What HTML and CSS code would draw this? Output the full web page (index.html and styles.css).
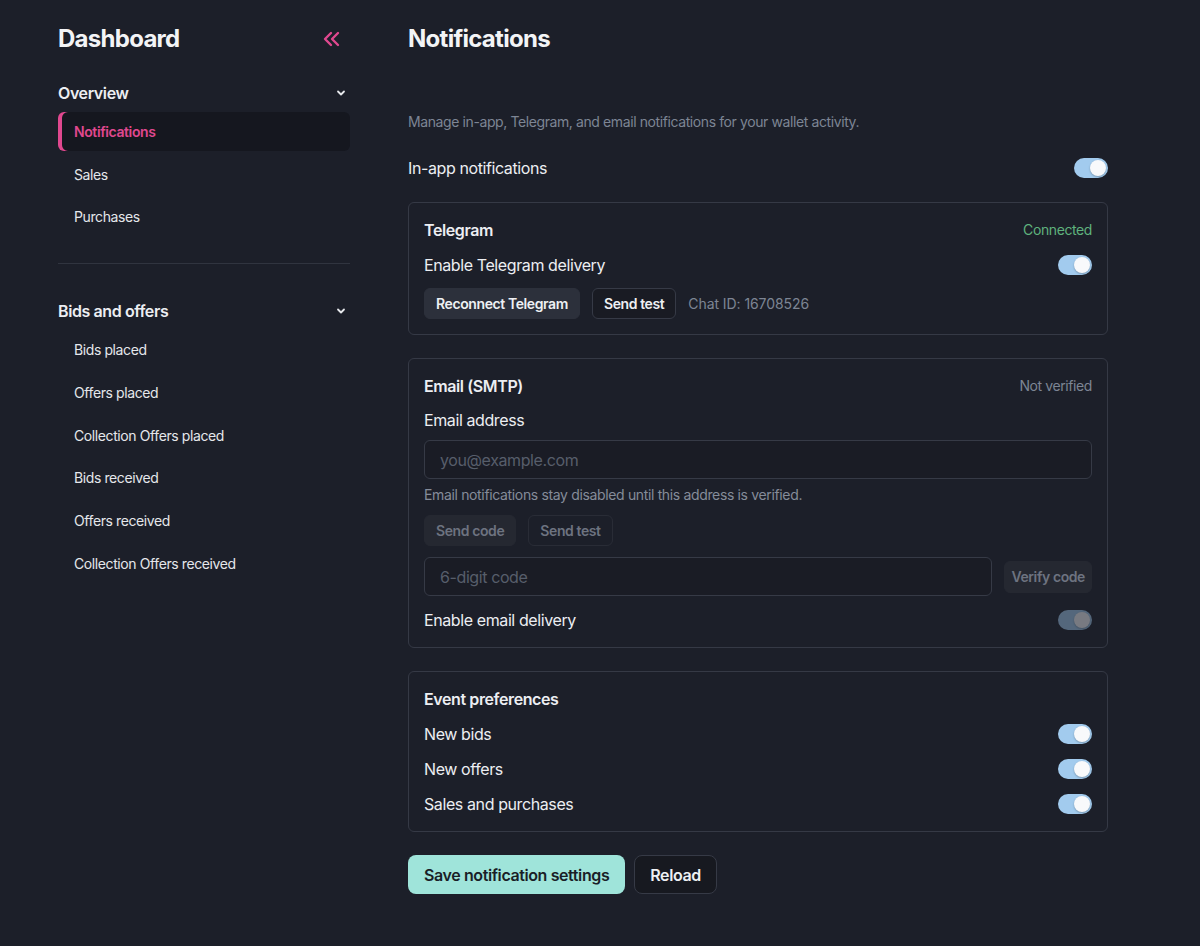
FILE: index.html
```html
<!DOCTYPE html>
<html lang="en">
<head>
<meta charset="utf-8">
<title>Notifications</title>
<link rel="stylesheet" href="styles.css">
</head>
<body>
<div class="layout">
  <aside class="sidebar">
    <div class="side-head">
      <h1 class="brand">Dashboard</h1>
      <button class="collapse" aria-label="Collapse">
        <svg width="20" height="20" viewBox="0 0 20 20" fill="none" stroke="currentColor" stroke-width="2.4" stroke-linecap="round" stroke-linejoin="round"><path d="M10 4 L4 10 L10 16"/><path d="M17 4 L11 10 L17 16"/></svg>
      </button>
    </div>

    <div class="section">
      <div class="section-head"><span>Overview</span>
        <svg class="chev" width="10" height="10" viewBox="0 0 10 10" fill="none" stroke="currentColor" stroke-width="1.8" stroke-linecap="round" stroke-linejoin="round"><path d="M2 3.5 L5 6.5 L8 3.5"/></svg>
      </div>
      <nav class="nav">
        <a class="nav-item active">Notifications</a>
        <a class="nav-item">Sales</a>
        <a class="nav-item">Purchases</a>
      </nav>
    </div>

    <div class="divider"></div>

    <div class="section section2">
      <div class="section-head"><span>Bids and offers</span>
        <svg class="chev" width="10" height="10" viewBox="0 0 10 10" fill="none" stroke="currentColor" stroke-width="1.8" stroke-linecap="round" stroke-linejoin="round"><path d="M2 3.5 L5 6.5 L8 3.5"/></svg>
      </div>
      <nav class="nav">
        <a class="nav-item">Bids placed</a>
        <a class="nav-item">Offers placed</a>
        <a class="nav-item">Collection Offers placed</a>
        <a class="nav-item">Bids received</a>
        <a class="nav-item">Offers received</a>
        <a class="nav-item">Collection Offers received</a>
      </nav>
    </div>
  </aside>

  <main class="main">
    <h1 class="page-title">Notifications</h1>
    <p class="desc">Manage in-app, Telegram, and email notifications for your wallet activity.</p>

    <div class="row inapp">
      <span>In-app notifications</span>
      <span class="toggle on"><span class="knob"></span></span>
    </div>

    <section class="card tg">
      <div class="row card-head">
        <span class="card-title">Telegram</span>
        <span class="status ok">Connected</span>
      </div>
      <div class="row">
        <span>Enable Telegram delivery</span>
        <span class="toggle on"><span class="knob"></span></span>
      </div>
      <div class="btns">
        <button class="btn solid">Reconnect Telegram</button>
        <button class="btn outline">Send test</button>
        <span class="muted chat">Chat ID: 16708526</span>
      </div>
    </section>

    <section class="card email">
      <div class="row card-head">
        <span class="card-title">Email (SMTP)</span>
        <span class="status muted">Not verified</span>
      </div>
      <label class="label">Email address</label>
      <div class="input email-input">you@example.com</div>
      <p class="help">Email notifications stay disabled until this address is verified.</p>
      <div class="btns btns-email">
        <button class="btn solid disabled">Send code</button>
        <button class="btn outline disabled">Send test</button>
      </div>
      <div class="code-row">
        <div class="input code-input">6-digit code</div>
        <button class="btn solid disabled verify">Verify code</button>
      </div>
      <div class="row enable-email">
        <span>Enable email delivery</span>
        <span class="toggle on off-state"><span class="knob"></span></span>
      </div>
    </section>

    <section class="card events">
      <div class="card-title ev-title">Event preferences</div>
      <div class="row"><span>New bids</span><span class="toggle on"><span class="knob"></span></span></div>
      <div class="row"><span>New offers</span><span class="toggle on"><span class="knob"></span></span></div>
      <div class="row"><span>Sales and purchases</span><span class="toggle on"><span class="knob"></span></span></div>
    </section>

    <div class="actions">
      <button class="btn primary">Save notification settings</button>
      <button class="btn outline big">Reload</button>
    </div>
  </main>
</div>
</body>
</html>
```

FILE: styles.css
```css
* { box-sizing: border-box; }
html, body { margin: 0; padding: 0; }
body {
  background: #1c1f29;
  color: #eceef2;
  font-family: Inter, "Noto Sans", "Liberation Sans", sans-serif;
  letter-spacing: -0.025em;
  height: 946px;
  overflow: hidden;
}
button { font-family: inherit; letter-spacing: inherit; cursor: pointer; }

.layout {
  display: flex;
  gap: 58px;
  padding-left: 58px;
}

/* Sidebar */
.sidebar {
  width: 292px;
  flex-shrink: 0;
  padding-top: 23px;
}
.side-head {
  display: flex;
  align-items: center;
  justify-content: space-between;
  height: 32px;
}
.brand {
  margin: 0;
  font-size: 24px;
  line-height: 32px;
  font-weight: 700;
  color: #f3f4f6;
  letter-spacing: -0.03em;
}
.collapse {
  background: none;
  border: 0;
  padding: 0;
  margin-right: 9px;
  color: #e0488f;
  display: flex;
}
.section { margin-top: 26px; }
.section2 { margin-top: 35px; }
.section-head {
  display: flex;
  align-items: center;
  justify-content: space-between;
  height: 24px;
  font-size: 16px;
  font-weight: 600;
  color: #eceef2;
}
.chev { margin-right: 4px; color: #e5e7eb; }
.nav {
  display: flex;
  flex-direction: column;
  gap: 3.7px;
  margin-top: 7px;
}
.nav-item {
  display: flex;
  align-items: center;
  height: 39px;
  padding-left: 16px;
  font-size: 14px;
  color: #e5e7eb;
  border-radius: 6px;
}
.nav-item.active {
  background: #15171f;
  color: #e0488f;
  font-weight: 600;
  box-shadow: inset 4px 0 0 #e0488f;
}
.divider {
  height: 1px;
  background: #30343f;
  margin-top: 27px;
}

/* Main */
.main {
  width: 700px;
  padding-top: 23px;
  font-size: 16px;
}
.page-title {
  margin: 0;
  font-size: 24px;
  line-height: 32px;
  font-weight: 700;
  color: #f3f4f6;
  letter-spacing: -0.03em;
}
.desc {
  margin: 57px 0 0;
  font-size: 14px;
  line-height: 20px;
  color: #7d8594;
}
.row {
  display: flex;
  align-items: center;
  justify-content: space-between;
  height: 24px;
  line-height: 24px;
}
.inapp { margin-top: 24px; }

.toggle {
  width: 34px;
  height: 20px;
  border-radius: 10px;
  background: #3a3f4b;
  display: inline-flex;
  align-items: center;
  padding: 2px;
  flex-shrink: 0;
}
.toggle.on {
  background: #a2cbee;
  justify-content: flex-end;
}
.knob {
  width: 16px;
  height: 16px;
  border-radius: 50%;
  background: #f8f9fb;
  box-shadow: 0 1px 2px rgba(0,0,0,0.25);
}
.toggle.off-state { opacity: 0.42; }

.card {
  border: 1px solid #353945;
  border-radius: 6px;
  padding: 15px 15px 15px;
  margin-top: 22px;
  display: flex;
  flex-direction: column;
}
.tg { gap: 11px; }
.email { margin-top: 23px; }
.events { margin-top: 23px; gap: 11px; }
.card-title { font-weight: 600; font-size: 16px; line-height: 24px; }
.status { font-size: 14px; }
.ok { color: #5fb27d; }
.muted { color: #7d8594; font-size: 14px; }
.chat { letter-spacing: -0.005em; }

.btns {
  display: flex;
  align-items: center;
  gap: 12px;
}
.btn {
  height: 31px;
  padding: 0 11px;
  border-radius: 6px;
  font-size: 14px;
  font-weight: 600;
  color: #eef0f3;
  border: 1px solid transparent;
  background: transparent;
}
.btn.solid { background: #2c303b; border-color: #2c303b; }
.btn.outline { border-color: #363a46; background: #191b23; }
.btn.disabled { color: #6d7380; }
.btn.solid.disabled { background: #252831; border-color: #252831; }
.btn.outline.disabled { border-color: #292c36; background: transparent; }

.label { display: block; margin-top: 10px; line-height: 24px; font-size: 16px; }
.input {
  height: 39px;
  border: 1px solid #363a46;
  border-radius: 6px;
  background: #1a1c25;
  padding-left: 15px;
  display: flex;
  align-items: center;
  font-size: 16px;
  color: #575e6b;
}
.email-input { margin-top: 8px; }
.help {
  margin: 7px 0 0;
  font-size: 14px;
  line-height: 18px;
  letter-spacing: -0.025em;
  color: #858c99;
}
.btns-email { margin-top: 11px; }
.code-row {
  display: flex;
  align-items: center;
  gap: 12px;
  margin-top: 11px;
}
.code-input { flex: 1; }
.verify { height: 32px; padding: 0 6px; }
.enable-email { margin-top: 12px; }
.ev-title { margin-bottom: 0; }

.actions {
  display: flex;
  gap: 9px;
  margin-top: 23px;
}
.btn.primary {
  height: 39px;
  padding: 0 15px;
  font-size: 16px;
  background: #9fe4da;
  color: #1a1e27;
  border-radius: 8px;
}
.btn.big {
  height: 39px;
  padding: 0 15px;
  font-size: 16px;
  border-radius: 8px;
  background: #171920;
}
```
